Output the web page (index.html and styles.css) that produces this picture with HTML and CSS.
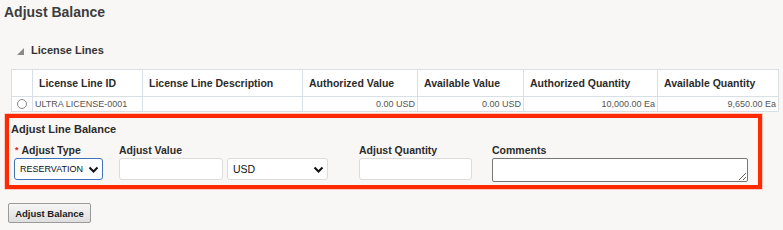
FILE: index.html
```html
<!DOCTYPE html>
<html lang="en">
  <head>
    <meta charset="utf-8" />
    <title>Adjust Balance</title>
    <link rel="stylesheet" href="styles.css">
  </head>
  <body>
    <div class="page">
      <h1 class="page-title">Adjust Balance</h1>

      <!-- License Lines -->
      <div class="section-head">
        <svg class="disclose" width="7" height="7" viewBox="0 0 7 7"><polygon points="7,0 7,7 0,7" fill="#8a8a8a" /></svg>
        <span>License Lines</span>
      </div>

      <table class="grid">
        <colgroup>
          <col style="width:21px" />
          <col style="width:110px" />
          <col style="width:160px" />
          <col style="width:115px" />
          <col style="width:106px" />
          <col style="width:134px" />
          <col style="width:121px" />
        </colgroup>
        <thead>
          <tr>
            <th></th>
            <th>License Line ID</th>
            <th>License Line Description</th>
            <th>Authorized Value</th>
            <th>Available Value</th>
            <th>Authorized Quantity</th>
            <th>Available Quantity</th>
          </tr>
        </thead>
        <tbody>
          <tr>
            <td class="sel"><span class="radio"></span></td>
            <td>ULTRA LICENSE-0001</td>
            <td></td>
            <td class="num">0.00 USD</td>
            <td class="num">0.00 USD</td>
            <td class="num">10,000.00 Ea</td>
            <td class="num">9,650.00 Ea</td>
          </tr>
        </tbody>
      </table>

      <!-- Adjust Line Balance -->
      <div class="adjust-box">
        <div class="box-title">Adjust Line Balance</div>
        <div class="fields">
          <div class="field f-type">
            <label><span class="req">*</span>Adjust Type</label>
            <div class="select-wrap focus">
              <select class="select"><option>RESERVATION</option></select>
              <svg class="chev" width="11" height="7" viewBox="0 0 11 7"><polyline points="1.5,1.5 5.5,5.5 9.5,1.5" fill="none" stroke="#111" stroke-width="2" /></svg>
            </div>
          </div>
          <div class="field f-value">
            <label>Adjust Value</label>
            <div class="row">
              <input class="text w-value" type="text" />
              <div class="select-wrap">
                <select class="select w-cur"><option>USD</option></select>
                <svg class="chev" width="11" height="7" viewBox="0 0 11 7"><polyline points="1.5,1.5 5.5,5.5 9.5,1.5" fill="none" stroke="#111" stroke-width="2" /></svg>
              </div>
            </div>
          </div>
          <div class="field f-qty">
            <label>Adjust Quantity</label>
            <input class="text w-qty" type="text" />
          </div>
          <div class="field f-comments">
            <label>Comments</label>
            <textarea class="comments"></textarea>
          </div>
        </div>
      </div>

      <button class="btn">Adjust Balance</button>
    </div>
  </body>
</html>
```

FILE: styles.css
```css
html, body {
  margin: 0;
  background: #f8f7f5;
}
body {
  font-family: "Liberation Sans", Arial, sans-serif;
  color: #333;
}
.page {
  padding: 3px 0 0 0;
}
.page-title {
  margin: 0 0 0 4px;
  font-size: 14px;
  line-height: 18px;
  font-weight: bold;
  color: #3d3d3d;
}
.section-head {
  display: flex;
  align-items: center;
  margin: 22px 0 0 17px;
  height: 14px;
  font-size: 11px;
  font-weight: bold;
  color: #333;
}
.disclose {
  margin-right: 7px;
  margin-top: 2px;
}
.grid {
  margin: 12px 0 0 11px;
  width: 767px;
  border-collapse: collapse;
  table-layout: fixed;
  background: #fff;
}
.grid th,
.grid td {
  border: 1px solid #d8e0e6;
  padding: 0 6px;
  white-space: nowrap;
  overflow: hidden;
}
.grid th {
  height: 26px;
  text-align: left;
  font-size: 10.5px;
  font-weight: bold;
  color: #2b2b2b;
}
.grid td {
  height: 14px;
  padding: 0 2px;
  font-size: 9px;
  color: #555;
}
.grid td.num {
  text-align: right;
}
.grid td.sel {
  padding: 0;
  text-align: center;
}
.radio {
  display: inline-block;
  width: 8px;
  height: 8px;
  border: 1px solid #888;
  border-radius: 50%;
  vertical-align: middle;
  background: #fff;
}
.adjust-box {
  margin: 2px 0 0 5px;
  width: 749px;
  height: 67px;
  border: 4px solid #ff2a00;
  box-shadow: 0 0 0 0.5px #ff9a85;
}
.box-title {
  margin: 5px 0 0 2px;
  font-size: 11px;
  line-height: 13px;
  font-weight: bold;
  color: #2b2b2b;
}
.fields {
  display: flex;
  margin-top: 8px;
}
.field label {
  display: block;
  height: 13px;
  font-size: 10.5px;
  font-weight: bold;
  color: #2b2b2b;
}
.req {
  color: #e0261b;
  margin-right: 3px;
  font-size: 9px;
  vertical-align: 1px;
}
.f-type {
  margin-left: 5px;
}
.f-type label {
  padding-left: 1px;
}
.f-value {
  margin-left: 16px;
}
.f-qty {
  margin-left: 31px;
}
.f-comments {
  margin-left: 20px;
}
.row {
  display: flex;
  gap: 4px;
}
.select-wrap {
  position: relative;
  margin-top: 1px;
}
.select {
  appearance: none;
  -webkit-appearance: none;
  display: block;
  box-sizing: border-box;
  width: 89px;
  height: 22px;
  margin: 0;
  padding: 0 0 0 5px;
  border: 1px solid #dcdcdc;
  border-radius: 3px;
  background: #fff;
  font-family: "Liberation Sans", Arial, sans-serif;
  font-size: 9px;
  color: #111;
}
.select-wrap.focus .select {
  border: 1.5px solid #3f73b8;
}
.select.w-cur {
  width: 101px;
  font-size: 10.5px;
}
.chev {
  position: absolute;
  right: 4px;
  top: 8px;
  pointer-events: none;
}
.text {
  display: block;
  box-sizing: border-box;
  height: 22px;
  margin: 1px 0 0 0;
  border: 1px solid #dcdcdc;
  border-radius: 3px;
  background: #fff;
}
.w-value {
  width: 104px;
}
.w-qty {
  width: 113px;
}
.comments {
  display: block;
  box-sizing: border-box;
  width: 256px;
  height: 24px;
  margin: 1px 0 0 0;
  border: 1px solid #777;
  border-radius: 2px;
  background: #fff;
  resize: both;
}
.btn {
  display: block;
  margin: 14px 0 0 8px;
  width: 83px;
  height: 20px;
  padding: 0;
  border: 1px solid #9a9a9a;
  border-radius: 2px;
  background: linear-gradient(#f6f6f6, #dedede);
  font-family: "Liberation Sans", Arial, sans-serif;
  font-size: 9.5px;
  font-weight: bold;
  color: #1a1a1a;
}
```
